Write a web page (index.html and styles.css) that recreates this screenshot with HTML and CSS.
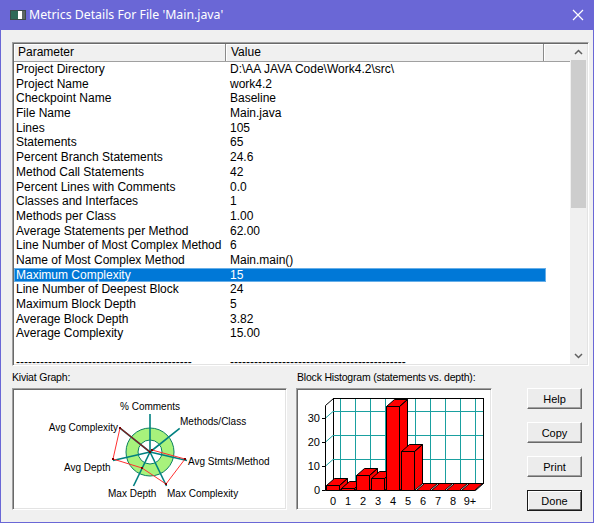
FILE: index.html
```html
<!DOCTYPE html>
<html lang="en">
<head>
    <meta charset="UTF-8">
    <title>Metrics Details For File 'Main.java'</title>
    <link rel="stylesheet" href="styles.css">
</head>
<body>

<div class="window">
    <div class="titlebar">
        <svg class="app-icon" width="16" height="10" viewBox="0 0 16 10">
            <rect x="0.5" y="0.5" width="15" height="9" fill="#ffffff" stroke="#3c4a48"/>
            <rect x="1" y="1" width="7" height="8" fill="#2f6a58"/>
            <rect x="12" y="1" width="3" height="8" fill="#5c6664"/>
        </svg>
        <span class="title">Metrics Details For File 'Main.java'</span>
        <svg class="close" width="12" height="12" viewBox="0 0 12 12">
            <path d="M1 1 L11 11 M11 1 L1 11" stroke="#ffffff" stroke-width="1.2"/>
        </svg>
    </div>

    <div class="client">
        <!-- metrics list -->
        <div class="listbox">
            <div class="view">
                <div class="header">
                    <div class="hcell h1">Parameter</div>
                    <div class="hcell h2">Value</div>
                    <div class="hcell h3"></div>
                </div>
                <div class="rows">
                    <div class="row"><span class="c1">Project Directory</span><span class="c2">D:\AA JAVA Code\Work4.2\src\</span></div>
                    <div class="row"><span class="c1">Project Name</span><span class="c2">work4.2</span></div>
                    <div class="row"><span class="c1">Checkpoint Name</span><span class="c2">Baseline</span></div>
                    <div class="row"><span class="c1">File Name</span><span class="c2">Main.java</span></div>
                    <div class="row"><span class="c1">Lines</span><span class="c2">105</span></div>
                    <div class="row"><span class="c1">Statements</span><span class="c2">65</span></div>
                    <div class="row"><span class="c1">Percent Branch Statements</span><span class="c2">24.6</span></div>
                    <div class="row"><span class="c1">Method Call Statements</span><span class="c2">42</span></div>
                    <div class="row"><span class="c1">Percent Lines with Comments</span><span class="c2">0.0</span></div>
                    <div class="row"><span class="c1">Classes and Interfaces</span><span class="c2">1</span></div>
                    <div class="row"><span class="c1">Methods per Class</span><span class="c2">1.00</span></div>
                    <div class="row"><span class="c1">Average Statements per Method</span><span class="c2">62.00</span></div>
                    <div class="row"><span class="c1">Line Number of Most Complex Method</span><span class="c2">6</span></div>
                    <div class="row"><span class="c1">Name of Most Complex Method</span><span class="c2">Main.main()</span></div>
                    <div class="row selected"><span class="c1">Maximum Complexity</span><span class="c2">15</span></div>
                    <div class="row"><span class="c1">Line Number of Deepest Block</span><span class="c2">24</span></div>
                    <div class="row"><span class="c1">Maximum Block Depth</span><span class="c2">5</span></div>
                    <div class="row"><span class="c1">Average Block Depth</span><span class="c2">3.82</span></div>
                    <div class="row"><span class="c1">Average Complexity</span><span class="c2">15.00</span></div>
                    <div class="row"><span class="c1"></span><span class="c2"></span></div>
                    <div class="row dashes"><span class="c1">--------------------------------------------</span><span class="c2">--------------------------------------------</span></div>
                </div>
            </div>
            <div class="scrollbar">
                <div class="sb-btn">
                    <svg width="9" height="6" viewBox="0 0 9 6"><path d="M1 5 L4.5 1.5 L8 5" fill="none" stroke="#606060" stroke-width="1.5"/></svg>
                </div>
                <div class="sb-track"><div class="sb-thumb"></div></div>
                <div class="sb-btn">
                    <svg width="9" height="6" viewBox="0 0 9 6"><path d="M1 1 L4.5 4.5 L8 1" fill="none" stroke="#606060" stroke-width="1.5"/></svg>
                </div>
            </div>
        </div>

        <div class="bottom">
            <!-- kiviat -->
            <div class="panel kiviat">
                <div class="label">Kiviat Graph:</div>
                <div class="sunken">
                    <svg width="271" height="118" viewBox="0 0 271 118">
                        <circle cx="136" cy="62" r="24" fill="#a8f27c" stroke="#0a8060" stroke-width="1"/>
                        <circle cx="136" cy="62" r="12" fill="#ffffff" stroke="#0a8060" stroke-width="1"/>
                        <g stroke="#008080" stroke-width="1.6">
                            <line x1="136" y1="62" x2="136" y2="24"/>
                            <line x1="136" y1="62" x2="165.7" y2="38.3"/>
                            <line x1="136" y1="62" x2="173" y2="70.5"/>
                            <line x1="136" y1="62" x2="152.5" y2="96"/>
                            <line x1="136" y1="62" x2="119.5" y2="96"/>
                            <line x1="136" y1="62" x2="99" y2="70.5"/>
                            <line x1="136" y1="62" x2="106.3" y2="38.3"/>
                        </g>
                        <polyline points="136,62 138,60 171,69 152,94 128,78 99,69 106,38" fill="none" stroke="#ff3030" stroke-width="1"/>
                        <line x1="106" y1="38" x2="136" y2="62" stroke="#8a1818" stroke-width="1.2"/>
                        <g fill="#7a0000">
                            <rect x="135" y="61" width="2" height="2"/>
                            <rect x="137" y="59" width="2" height="2"/>
                            <rect x="170" y="68" width="2" height="2"/>
                            <rect x="151" y="93" width="2" height="2"/>
                            <rect x="127" y="77" width="2" height="2"/>
                            <rect x="98" y="68" width="2" height="2"/>
                            <rect x="105" y="37" width="2" height="2"/>
                        </g>
                        <g class="klabel">
                            <text x="136" y="20" text-anchor="middle">% Comments</text>
                            <text x="166" y="35">Methods/Class</text>
                            <text x="104" y="41" text-anchor="end">Avg Complexity</text>
                            <text x="174" y="75">Avg Stmts/Method</text>
                            <text x="50" y="81">Avg Depth</text>
                            <text x="94" y="107">Max Depth</text>
                            <text x="153" y="107">Max Complexity</text>
                        </g>
                    </svg>
                </div>
            </div>

            <!-- histogram -->
            <div class="panel hist">
                <div class="label">Block Histogram (statements vs. depth):</div>
                <div class="sunken">
                    <svg width="192" height="118" viewBox="0 0 192 118">
                        <!-- back plane and grid -->
                        <rect x="35.5" y="8.5" width="150" height="85" fill="#ffffff" stroke="#000000"/>
                        <g stroke="#1aa0a0" stroke-width="1">
                            <line x1="42.5" y1="9" x2="42.5" y2="93"/>
                            <line x1="57.5" y1="9" x2="57.5" y2="93"/>
                            <line x1="72.5" y1="9" x2="72.5" y2="93"/>
                            <line x1="87.5" y1="9" x2="87.5" y2="93"/>
                            <line x1="102.5" y1="9" x2="102.5" y2="93"/>
                            <line x1="117.5" y1="9" x2="117.5" y2="93"/>
                            <line x1="132.5" y1="9" x2="132.5" y2="93"/>
                            <line x1="147.5" y1="9" x2="147.5" y2="93"/>
                            <line x1="162.5" y1="9" x2="162.5" y2="93"/>
                            <line x1="177.5" y1="9" x2="177.5" y2="93"/>
                            <line x1="35" y1="69.5" x2="185" y2="69.5"/>
                            <line x1="35" y1="45.5" x2="185" y2="45.5"/>
                            <line x1="35" y1="21.5" x2="185" y2="21.5"/>
                            <line x1="27" y1="76.5" x2="35" y2="69.5"/>
                            <line x1="27" y1="52.5" x2="35" y2="45.5"/>
                            <line x1="27" y1="28.5" x2="35" y2="21.5"/>
                        </g>
                        <!-- side wall and floor edges -->
                        <g stroke="#000000" stroke-width="1" fill="none">
                            <polyline points="35.5,8.5 27.5,15.5 27.5,100.5 177.5,100.5 185.5,93.5"/>
                            <line x1="27.5" y1="100.5" x2="35.5" y2="93.5"/>
                            <line x1="24" y1="100.5" x2="27" y2="100.5"/>
                            <line x1="24" y1="76.5" x2="27" y2="76.5"/>
                            <line x1="24" y1="52.5" x2="27" y2="52.5"/>
                            <line x1="24" y1="28.5" x2="27" y2="28.5"/>
                        </g>
                        <!-- bars: front, top, side -->
                        <g fill="#ff0000" stroke="#000000" stroke-width="1" stroke-linejoin="round">
                            <path d="M28.5 95.5 h13 v5 h-13 z M28.5 95.5 l8 -7 h13 l-8 7 z M41.5 95.5 l8 -7 v5 l-8 7 z"/>
                            <path d="M43.5 98.5 h13 v2 h-13 z M43.5 98.5 l8 -7 h13 l-8 7 z M56.5 98.5 l8 -7 v2 l-8 7 z"/>
                            <path d="M58.5 85.5 h13 v15 h-13 z M58.5 85.5 l8 -7 h13 l-8 7 z M71.5 85.5 l8 -7 v15 l-8 7 z"/>
                            <path d="M73.5 88.5 h13 v12 h-13 z M73.5 88.5 l8 -7 h13 l-8 7 z M86.5 88.5 l8 -7 v12 l-8 7 z"/>
                            <path d="M88.5 16.5 h13 v84 h-13 z M88.5 16.5 l8 -7 h13 l-8 7 z M101.5 16.5 l8 -7 v84 l-8 7 z"/>
                            <path d="M103.5 61.5 h13 v39 h-13 z M103.5 61.5 l8 -7 h13 l-8 7 z M116.5 61.5 l8 -7 v39 l-8 7 z"/>
                            <path d="M118.5 100.5 l8 -7 h13 l-8 7 z"/>
                            <path d="M133.5 100.5 l8 -7 h13 l-8 7 z"/>
                            <path d="M148.5 100.5 l8 -7 h13 l-8 7 z"/>
                            <path d="M163.5 100.5 l8 -7 h13 l-8 7 z"/>
                        </g>
                        <g class="hlabel">
                            <text x="22" y="104" text-anchor="end">0</text>
                            <text x="22" y="80" text-anchor="end">10</text>
                            <text x="22" y="56" text-anchor="end">20</text>
                            <text x="22" y="32" text-anchor="end">30</text>
                            <text x="35" y="115" text-anchor="middle">0</text>
                            <text x="50" y="115" text-anchor="middle">1</text>
                            <text x="65" y="115" text-anchor="middle">2</text>
                            <text x="80" y="115" text-anchor="middle">3</text>
                            <text x="95" y="115" text-anchor="middle">4</text>
                            <text x="110" y="115" text-anchor="middle">5</text>
                            <text x="125" y="115" text-anchor="middle">6</text>
                            <text x="140" y="115" text-anchor="middle">7</text>
                            <text x="155" y="115" text-anchor="middle">8</text>
                            <text x="172" y="115" text-anchor="middle">9+</text>
                        </g>
                    </svg>
                </div>
            </div>

            <div class="buttons">
                <button class="btn">Help</button>
                <button class="btn">Copy</button>
                <button class="btn">Print</button>
                <button class="btn default">Done</button>
            </div>
        </div>
    </div>
</div>

</body>
</html>
```

FILE: styles.css
```css
/* General styles */
body {
    margin: 0;
    padding: 0;
    font-family: "Liberation Sans", Arial, sans-serif;
    background: #f0f0f0;
}

.window {
    width: 594px;
    height: 523px;
    box-sizing: border-box;
    padding: 0 1px 1px 1px;
    background: #6a67d6;
    display: flex;
    flex-direction: column;
}

/* Title bar */
.titlebar {
    height: 30px;
    display: flex;
    align-items: center;
    padding-left: 9px;
    color: #ffffff;
}

.app-icon {
    margin-right: 3px;
    margin-top: -1px;
}

.title {
    font-family: "Noto Sans", "Open Sans", sans-serif;
    font-size: 12.3px;
    flex: 1;
    margin-top: -1px;
}

.close {
    margin-right: 9px;
}

.client {
    flex: 1;
    background: #f0f0f0;
    padding: 12px 0 0 11px;
}

/* List box */
.listbox {
    width: 577px;
    height: 324px;
    box-sizing: border-box;
    display: flex;
    border: 1px solid;
    border-color: #a0a0a0 #ffffff #ffffff #a0a0a0;
    box-shadow: inset 1px 1px #696969, inset -1px -1px #e3e3e3;
    padding: 1px;
    background: #ffffff;
}

.view {
    width: 556px;
    overflow: hidden;
    font-size: 12px;
}

.header {
    display: flex;
    height: 18px;
    box-sizing: border-box;
    background: #f0f0f0;
    border-bottom: 1px solid #a0a0a0;
}

.hcell {
    box-sizing: border-box;
    height: 17px;
    line-height: 17px;
    border-right: 1px solid #8a8a8a;
    box-shadow: inset 1px 1px #ffffff;
}

.h1 {
    width: 212px;
    padding-left: 4px;
}

.h2 {
    width: 318px;
    padding-left: 5px;
}

.h3 {
    flex: 1;
    border-right: none;
}

.rows {
    height: 302px;
    overflow: hidden;
}

.row {
    display: flex;
    width: 532px;
    height: 14.7px;
    line-height: 14.7px;
    white-space: nowrap;
    color: #000000;
}

.row.dashes {
    line-height: 12px;
}

.row.selected {
    background: #0078d7;
    color: #ffffff;
    box-shadow: inset 0 0 0 1px #66aee8;
}

.c1 {
    width: 212px;
    padding-left: 2px;
    box-sizing: border-box;
    overflow: hidden;
}

.c2 {
    width: 320px;
    padding-left: 4px;
    box-sizing: border-box;
    overflow: hidden;
}

/* Scrollbar */
.scrollbar {
    width: 17px;
    display: flex;
    flex-direction: column;
    background: #f0f0f0;
}

.sb-btn {
    height: 16px;
    display: flex;
    align-items: center;
    justify-content: center;
}

.sb-track {
    flex: 1;
    padding: 0 1px;
}

.sb-thumb {
    height: 148px;
    background: #cdcdcd;
}

/* Bottom panels */
.bottom {
    display: flex;
    margin-top: 5px;
}

.label {
    font-size: 10.5px;
    height: 12px;
    line-height: 12px;
    margin-bottom: 5px;
    color: #000000;
    letter-spacing: -0.2px;
}

.sunken {
    box-sizing: border-box;
    height: 122px;
    border: 1px solid;
    border-color: #a0a0a0 #ffffff #ffffff #a0a0a0;
    box-shadow: inset 1px 1px #696969, inset -1px -1px #e3e3e3;
    padding: 1px;
    background: #ffffff;
}

.sunken svg {
    display: block;
}

.kiviat {
    width: 275px;
}

.hist {
    width: 196px;
    margin-left: 9px;
}

.hist .label {
    padding-left: 1px;
}

.klabel text {
    font-family: "Liberation Sans", Arial, sans-serif;
    font-size: 10px;
    fill: #000000;
}

.hlabel text {
    font-family: "Liberation Sans", Arial, sans-serif;
    font-size: 11px;
    fill: #000000;
}

/* Buttons */
.buttons {
    display: flex;
    flex-direction: column;
    gap: 13px;
    margin-left: 35px;
    padding-top: 17px;
}

.btn {
    width: 55px;
    height: 21px;
    padding: 0;
    font-family: "Liberation Sans", Arial, sans-serif;
    font-size: 11px;
    color: #000000;
    background: #ececec;
    border: 1px solid;
    border-color: #ffffff #696969 #696969 #ffffff;
    box-shadow: inset -1px -1px #a0a0a0;
}

.btn.default {
    border: 1px solid #1a1a1a;
    box-shadow: inset 1px 1px #ffffff, inset -1px -1px #696969;
}
```
